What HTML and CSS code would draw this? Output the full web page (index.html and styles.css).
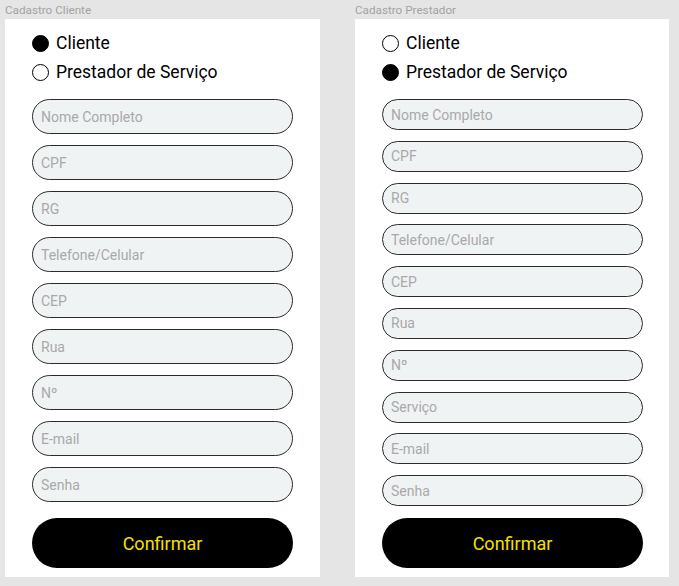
FILE: index.html
```html
<!DOCTYPE html>
<html lang="pt-BR">
<head>
<meta charset="utf-8">
<title>Cadastro</title>
<link rel="stylesheet" href="styles.css">
</head>
<body>
<main class="board">
  <section class="artboard">
    <div class="frame-label">Cadastro Cliente</div>
    <div class="frame frame-cliente">
      <div class="radio-group">
        <div class="radio-row"><span class="radio checked"></span><span class="radio-text">Cliente</span></div>
        <div class="radio-row"><span class="radio"></span><span class="radio-text">Prestador de Serviço</span></div>
      </div>
      <div class="fields">
        <div class="field">Nome Completo</div>
        <div class="field">CPF</div>
        <div class="field">RG</div>
        <div class="field">Telefone/Celular</div>
        <div class="field">CEP</div>
        <div class="field">Rua</div>
        <div class="field">Nº</div>
        <div class="field">E-mail</div>
        <div class="field">Senha</div>
      </div>
      <div class="btn">Confirmar</div>
    </div>
  </section>
  <section class="artboard">
    <div class="frame-label">Cadastro Prestador</div>
    <div class="frame frame-prestador">
      <div class="radio-group">
        <div class="radio-row"><span class="radio"></span><span class="radio-text">Cliente</span></div>
        <div class="radio-row"><span class="radio checked"></span><span class="radio-text">Prestador de Serviço</span></div>
      </div>
      <div class="fields">
        <div class="field">Nome Completo</div>
        <div class="field">CPF</div>
        <div class="field">RG</div>
        <div class="field">Telefone/Celular</div>
        <div class="field">CEP</div>
        <div class="field">Rua</div>
        <div class="field">Nº</div>
        <div class="field">Serviço</div>
        <div class="field">E-mail</div>
        <div class="field field-shadow">Senha</div>
      </div>
      <div class="btn">Confirmar</div>
    </div>
  </section>
</main>
</body>
</html>
```

FILE: styles.css
```css
* { box-sizing: border-box; }

html, body {
  margin: 0;
  padding: 0;
  background: #e5e5e5;
  font-family: Roboto, "Liberation Sans", Arial, sans-serif;
}

.board {
  display: flex;
  gap: 35px;
  padding-left: 5px;
}

.artboard {
  display: flex;
  flex-direction: column;
}

.frame-label {
  height: 19px;
  padding-top: 3px;
  font-size: 11.7px;
  line-height: 14px;
  color: #a3a3a3;
}

.frame {
  background: #ffffff;
  height: 558px;
  padding: 10px 27px 9px 27px;
  display: flex;
  flex-direction: column;
}

.frame-cliente { width: 315px; }
.frame-prestador { width: 314px; padding-right: 26px; }

.radio-group {
  display: flex;
  flex-direction: column;
}

.radio-row {
  display: flex;
  align-items: center;
  height: 29px;
  font-size: 17.5px;
  line-height: 29px;
  color: #000;
}

.radio {
  width: 17px;
  height: 17px;
  border-radius: 50%;
  border: 1.3px solid #000;
  background: #fff;
  margin-right: 7px;
  flex: none;
}

.radio.checked {
  background: #000;
}

.fields {
  display: flex;
  flex-direction: column;
  margin-top: 12px;
}

.frame-cliente .fields { gap: 11px; }
.frame-prestador .fields { gap: 10.8px; }

.field {
  width: 261px;
  background: #f0f3f4;
  border: 1px solid #2b2b2b;
  border-radius: 18px;
  padding-left: 8px;
  font-size: 14px;
  color: #a9a9a9;
  display: flex;
  align-items: center;
}

.frame-cliente .field { height: 35px; }
.frame-prestador .field { height: 31px; border-radius: 16px; }

.field-shadow {
  box-shadow: 3px 0 2px rgba(0, 0, 0, 0.06);
}

.btn {
  width: 261px;
  height: 50px;
  background: #000;
  border-radius: 25px;
  color: #f7e000;
  font-size: 18px;
  display: flex;
  align-items: center;
  justify-content: center;
}

.frame-cliente .btn { margin-top: 16px; }
.frame-prestador .btn { margin-top: 12px; }
```
